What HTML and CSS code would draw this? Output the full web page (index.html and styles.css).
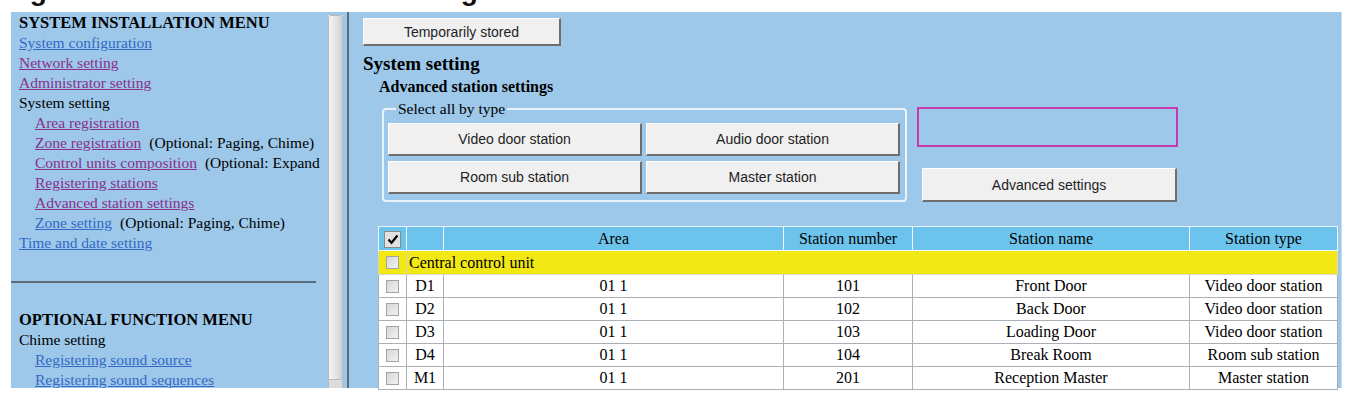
FILE: index.html
```html
<!DOCTYPE html>
<html>
<head>
<meta charset="utf-8">
<link rel="stylesheet" href="styles.css">
</head>
<body>
<div class="top-strip"><h1 class="fig-title">Registration of the advanced settings</h1></div>
<div class="frames">
  <div class="left">
    <div class="nav">
      <div class="nav-head">SYSTEM INSTALLATION MENU</div>
      <div class="line"><a class="lnk">System configuration</a></div>
      <div class="line"><a class="vis">Network setting</a></div>
      <div class="line"><a class="vis">Administrator setting</a></div>
      <div class="line">System setting</div>
      <div class="line sub"><a class="vis">Area registration</a></div>
      <div class="line sub"><a class="vis">Zone registration</a><span class="note">(Optional: Paging, Chime)</span></div>
      <div class="line sub"><a class="vis">Control units composition</a><span class="note">(Optional: Expand units)</span></div>
      <div class="line sub"><a class="vis">Registering stations</a></div>
      <div class="line sub"><a class="vis">Advanced station settings</a></div>
      <div class="line sub"><a class="lnk">Zone setting</a><span class="note">(Optional: Paging, Chime)</span></div>
      <div class="line"><a class="lnk">Time and date setting</a></div>
      <hr class="rule">
      <div class="nav-head opt">OPTIONAL FUNCTION MENU</div>
      <div class="line">Chime setting</div>
      <div class="line sub"><a class="lnk">Registering sound source</a></div>
      <div class="line sub"><a class="lnk">Registering sound sequences</a></div>
    </div>
    <div class="scrollbar"><div class="thumb"></div><div class="arrow"></div></div>
  </div>
  <div class="divider"></div>
  <div class="right">
    <button class="btn btn-temp">Temporarily stored</button>
    <h2 class="title">System setting</h2>
    <h3 class="subtitle">Advanced station settings</h3>
    <div class="controls">
      <fieldset class="types">
        <legend>Select all by type</legend>
        <div class="type-grid">
          <button class="btn btn-type">Video door station</button>
          <button class="btn btn-type">Audio door station</button>
          <button class="btn btn-type">Room sub station</button>
          <button class="btn btn-type">Master station</button>
        </div>
      </fieldset>
      <div class="side">
        <div class="msgbox"></div>
        <button class="btn btn-adv">Advanced settings</button>
      </div>
    </div>
    <table class="stations">
      <colgroup>
        <col class="c-chk"><col class="c-id"><col class="c-area"><col class="c-num"><col class="c-name"><col class="c-type">
      </colgroup>
      <thead>
        <tr>
          <th class="chk-head"><span class="cb-all"><svg width="12" height="11" viewBox="0 0 12 11"><path d="M1.5 5.5 L4.5 8.8 L10.5 1.5" fill="none" stroke="#000" stroke-width="2.2"/></svg></span></th>
          <th></th>
          <th>Area</th>
          <th>Station number</th>
          <th>Station name</th>
          <th>Station type</th>
        </tr>
      </thead>
      <tbody>
        <tr class="group">
          <td class="chk"><span class="cb"></span></td>
          <td colspan="5" class="group-name">Central control unit</td>
        </tr>
        <tr><td class="chk"><span class="cb"></span></td><td>D1</td><td>01 1</td><td>101</td><td>Front Door</td><td>Video door station</td></tr>
        <tr><td class="chk"><span class="cb"></span></td><td>D2</td><td>01 1</td><td>102</td><td>Back Door</td><td>Video door station</td></tr>
        <tr><td class="chk"><span class="cb"></span></td><td>D3</td><td>01 1</td><td>103</td><td>Loading Door</td><td>Video door station</td></tr>
        <tr><td class="chk"><span class="cb"></span></td><td>D4</td><td>01 1</td><td>104</td><td>Break Room</td><td>Room sub station</td></tr>
        <tr><td class="chk"><span class="cb"></span></td><td>M1</td><td>01 1</td><td>201</td><td>Reception Master</td><td>Master station</td></tr>
      </tbody>
    </table>
  </div>
</div>
</body>
</html>
```
FILE: styles.css
```css
html, body {
  margin: 0;
  padding: 0;
  background: #ffffff;
}
body {
  font-family: "Liberation Serif", "Times New Roman", serif;
  color: #000;
  width: 1347px;
  height: 400px;
  overflow: hidden;
}
.top-strip {
  display: flow-root;
  height: 12px;
  overflow: hidden;
}
.fig-title {
  margin: -23px 0 0 -6px;
  font-family: "Liberation Sans", Arial, sans-serif;
  font-size: 28px;
  line-height: 28px;
  font-weight: bold;
  white-space: nowrap;
  color: #111;
}
.frames {
  display: flex;
  margin-left: 11px;
  width: 1331px;
  height: 376px;
}
.left {
  width: 336px;
  background: #9dc8ea;
  display: flex;
  flex: none;
}
.nav {
  width: 304px;
  padding: 1px 0 0 8px;
  overflow: hidden;
  white-space: nowrap;
  font-size: 15.5px;
}
.nav-head {
  font-weight: bold;
  font-size: 16.5px;
  line-height: 20px;
}
.nav-head.opt {
  margin-top: 27px;
}
.line {
  line-height: 20px;
  height: 20px;
}
.line.sub {
  padding-left: 16px;
}
.lnk {
  color: #3468c4;
  text-decoration: underline;
}
.vis {
  color: #88308c;
  text-decoration: underline;
}
.note {
  margin-left: 8px;
}
.rule {
  margin: 28px 0 0 -8px;
  width: 305px;
  height: 2px;
  border: 0;
  background: #5a6d7d;
}
.scrollbar {
  width: 15px;
  margin: 3px 0 0 5px;
  flex: none;
  display: flex;
  flex-direction: column;
  background: #e6e6e6;
}
.thumb {
  flex: 1;
  border: 1px solid #b9b9b9;
  border-radius: 3px 3px 0 0;
  background: linear-gradient(to right, #f4f4f4, #e2e2e2 60%, #cfcfcf);
}
.arrow {
  height: 8px;
  background: #dcdcdc;
  border-left: 1px solid #b9b9b9;
  border-right: 1px solid #b9b9b9;
}
.divider {
  width: 2px;
  flex: none;
  background: #5e6d7a;
}
.right {
  flex: 1;
  background: #9dc8ea;
  padding: 6px 0 0 14px;
  border-right: 1px solid #c9dff0;
}
.btn {
  font-family: "Liberation Sans", Arial, sans-serif;
  font-size: 14px;
  color: #1e1e1e;
  background: #f0f0f0;
  border-style: solid;
  border-width: 1px 2px 2px 1px;
  border-color: #ffffff #6e6e6e #6e6e6e #ffffff;
  padding: 0;
  margin: 0;
  display: block;
}
.btn-temp {
  width: 198px;
  height: 28px;
}
.title {
  margin: 7px 0 0 0;
  font-size: 19px;
  line-height: 22px;
  font-weight: bold;
}
.subtitle {
  margin: 2px 0 0 16px;
  font-size: 16px;
  line-height: 20px;
  font-weight: bold;
}
.controls {
  display: flex;
  align-items: flex-start;
}
.types {
  margin: 4px 0 0 19px;
  padding: 6px 5px 6px 5px;
  border: 2px solid #e9f3fb;
  border-radius: 4px;
  width: 509px;
  box-sizing: border-box;
}
.types legend {
  font-size: 15.5px;
  line-height: 16px;
  padding: 0 2px;
  margin-left: 7px;
}
.type-grid {
  display: grid;
  grid-template-columns: 254px 254px;
  gap: 5px 4px;
  margin-left: -1px;
}
.btn-type {
  height: 33px;
  width: 254px;
}
.side {
  margin-left: 10px;
  margin-top: 10px;
}
.msgbox {
  width: 257px;
  height: 36px;
  border: 2px solid #c63cb0;
}
.btn-adv {
  margin: 21px 0 0 5px;
  width: 255px;
  height: 34px;
}
.stations {
  margin: 24px 0 0 15px;
  border-collapse: collapse;
  table-layout: fixed;
  width: 959px;
  font-size: 16px;
  background: #fff;
  border-top: 1px solid #e9f3fb;
  border-left: 1px solid #e9f3fb;
}
.c-chk { width: 28px; }
.c-id { width: 37px; }
.c-area { width: 340px; }
.c-num { width: 129px; }
.c-name { width: 277px; }
.c-type { width: 148px; }
.stations th {
  background: #6cc4ec;
  font-weight: normal;
  height: 23px;
  padding: 0;
  line-height: 20px;
  border: 1px solid #f2f8fc;
  border-top: 0;
  text-align: center;
}
.stations td {
  height: 22px;
  padding: 0;
  line-height: 20px;
  text-align: center;
  border: 1px solid #aab0b6;
  white-space: nowrap;
  overflow: hidden;
}
.stations tr.group td {
  height: 23px;
  background: #f2e814;
  border-color: #d8d8c8;
}
.stations td.group-name {
  text-align: left;
  padding-left: 2px;
}
.cb-all {
  display: inline-flex;
  align-items: center;
  justify-content: center;
  width: 15px;
  height: 15px;
  background: #e2e2e2;
  border: 1px solid #8a8a8a;
  vertical-align: middle;
}
.cb {
  display: inline-block;
  width: 11px;
  height: 11px;
  border: 1px solid #a3a3a3;
  background: linear-gradient(135deg, #d6d6d6, #f2f2f2);
  vertical-align: middle;
  margin-top: -2px;
}
```
